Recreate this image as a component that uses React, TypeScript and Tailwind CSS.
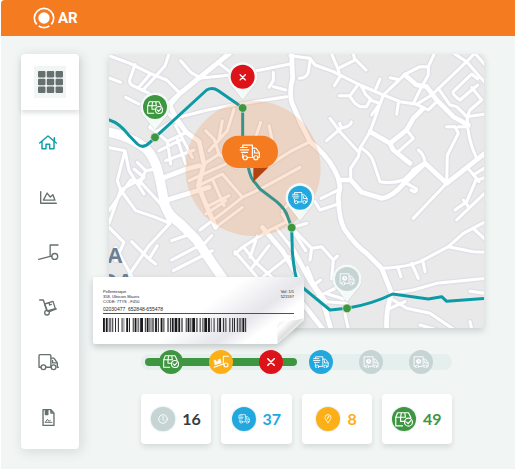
import { ReactNode } from 'react';
import clsx from 'clsx';

interface IconProps {
  className?: string;
  x?: number;
  y?: number;
  width?: number;
  height?: number;
}

const stroke = {
  fill: 'none',
  stroke: 'currentColor',
  strokeLinecap: 'round',
  strokeLinejoin: 'round',
} as const;

function FastTruckIcon(props: IconProps) {
  return (
    <svg viewBox="0 0 60 48" {...stroke} strokeWidth={3.4} {...props}>
      <path d="M9 8V3h28v36H23M9 29v10M37 12h10l10 13v14h-4" />
      <path d="M43 18v8h13M2 10h20M0 17h26M5 24h18" />
      <circle cx="16" cy="40" r="6" />
      <circle cx="47" cy="40" r="6" />
    </svg>
  );
}

function ClockTruckIcon(props: IconProps) {
  return (
    <svg viewBox="0 0 60 48" {...stroke} strokeWidth={3.4} {...props}>
      <path d="M10 39H4V3h34v36H22M38 12h9l10 14v13h-4M44 18v8h12" />
      <circle cx="21" cy="20" r="8" fill="currentColor" />
      <path d="M21 15v6h4" stroke="#c6d4d3" strokeWidth={2.5} />
      <circle cx="16" cy="40" r="6" />
      <circle cx="47" cy="40" r="6" />
    </svg>
  );
}

function BoxCheckIcon(props: IconProps) {
  return (
    <svg viewBox="0 0 48 40" {...stroke} strokeWidth={3.2} {...props}>
      <path d="M20 37H2V14L7 2h29l6 12v2M2 14h24M17 2l-2 12v11h12M26 2l2 12" />
      <circle cx="36" cy="27" r="10.5" />
      <path d="M31 27l4 4 7-8" />
    </svg>
  );
}

function LoaderIcon(props: IconProps) {
  return (
    <svg viewBox="0 0 48 40" {...stroke} strokeWidth={3.2} {...props}>
      <path d="M46 4H31v23L3 37M31 28l2 1" />
      <circle cx="39" cy="30" r="6" />
      <path d="M3 15l6 1 1 4 6-2-1-4 7-2 3 12-19 6z" fill="currentColor" strokeWidth={1} />
    </svg>
  );
}

function CrossIcon(props: IconProps) {
  return (
    <svg viewBox="0 0 20 20" {...stroke} strokeWidth={4} {...props}>
      <path d="M2 2l16 16M18 2L2 18" />
    </svg>
  );
}

function ClockIcon(props: IconProps) {
  return (
    <svg viewBox="0 0 28 28" {...stroke} strokeWidth={2.6} {...props}>
      <circle cx="14" cy="14" r="12" />
      <path d="M14 7v8l4 4" />
    </svg>
  );
}

function PlaceIcon(props: IconProps) {
  return (
    <svg viewBox="0 0 24 28" {...stroke} strokeWidth={2.4} {...props}>
      <path d="M12 26C8 20 3 16 3 10a9 8 0 0118 0c0 6-5 10-9 16z" />
      <path d="M9 16l6-9M15 9l-4 1" />
    </svg>
  );
}

const menu: { label: string; icon: ReactNode }[] = [
  {
    label: 'Home',
    icon: (
      <svg viewBox="0 0 54 44" {...stroke} strokeWidth={4.4} className="w-[18px] text-[#0f9fa8]">
        <path d="M2 24L27 3l25 21M9 19v22h12V28h11v13h13V19M46 17V8" />
      </svg>
    ),
  },
  {
    label: 'Statistics',
    icon: (
      <svg viewBox="0 0 50 38" {...stroke} strokeWidth={4} className="w-[17px]">
        <path d="M2 2v34h46M10 27h34L38 11l-8 7-9-12z" />
      </svg>
    ),
  },
  {
    label: 'Loading',
    icon: (
      <svg viewBox="0 0 64 50" {...stroke} strokeWidth={4} className="w-[21px]">
        <path d="M61 3H37v35L2 47M37 37l5 1" />
        <circle cx="51" cy="38" r="9" />
      </svg>
    ),
  },
  {
    label: 'Parcels',
    icon: (
      <svg viewBox="0 0 54 50" {...stroke} strokeWidth={4} className="w-[18px]">
        <path d="M2 3h11l10 31M31 38l21-8" />
        <path d="M17 15l25-8 7 22-24 7zM30 11l2 7 5-2" />
        <circle cx="24" cy="41" r="7" />
      </svg>
    ),
  },
  {
    label: 'Deliveries',
    icon: (
      <svg viewBox="0 0 62 48" {...stroke} strokeWidth={4} className="w-[21px]">
        <path d="M8 39H3V5q0-3 3-3h29q3 0 3 3v34H24M38 12h9l10 14v13h3M46 26h11M38 39h1M43 19v7h10" />
        <circle cx="16" cy="39" r="7" />
        <circle cx="46" cy="39" r="7" />
      </svg>
    ),
  },
  {
    label: 'Reports',
    icon: (
      <svg viewBox="0 0 38 50" {...stroke} strokeWidth={4} className="w-[13px]">
        <path d="M3 2h23l9 10v36H3zM26 2v10h9M10 3v13h7V3M13 4v11" />
        <path d="M9 39h20M11 37l5-7 4 6 4-2" strokeWidth={2.8} />
      </svg>
    ),
  },
];

const mainRoads = [
  'M-5 234C40 240 85 262 112 285C145 320 152 370 162 425C168 475 190 490 213 508L263 558L303 618L360 700L450 822',
];

const wideRoads = [
  'M365 -5L213 118L125 220',
  'M213 118L180 150L200 190L232 235L270 262L285 330L268 395L290 450L320 520',
  'M548 0L551 73Q540 110 548 145L573 203L603 263Q650 300 675 345L688 373L693 400L688 428Q690 500 708 528Q740 575 773 598L818 643L848 718Q830 770 833 825',
  'M888 63L923 93L953 98L983 138L1033 188L1078 213',
  'M943 163L913 193L893 228L843 268L853 288L903 328',
  'M783 233L843 268',
  'M913 350L948 328L1013 388L1130 296',
  'M688 378H725L758 415L818 433Q850 430 888 385L948 328',
  'M162 372L232 345L270 335M168 440L250 415L300 400',
  'M460 520L520 590L575 680M543 700L640 823',
  'M543 570L603 680L640 735L665 823',
];

const roads = [
  'M-5 3L63 28L123 58L173 78L213 118',
  'M78 32L62 78Q60 92 78 98L120 118L170 170L232 235',
  'M180 0L168 35L130 78M122 62L88 102M100 110L130 78',
  'M215 20L245 55L275 72M330 28L365 55',
  'M275 72L345 65L420 55L543 30',
  'M218 188L295 168L373 153L533 128',
  'M493 55V80L480 100M493 98L530 108',
  'M543 5L603 13L618 33L673 53L753 93L823 123L873 143L923 151L968 123L1073 23L1100 -5',
  'M603 18L598 55Q592 73 571 73',
  'M668 0L688 48L693 68L676 95M688 43L738 18L733 0M738 15L771 48',
  'M813 75L801 103M863 181L868 148',
  'M823 123L888 61L933 38H958L978 -5M958 38V63L938 98L913 148M843 71L865 76',
  'M988 103L1023 153L1043 158L1073 188L1130 180',
  'M983 143L958 168L923 151M893 228L913 253L868 293',
  'M823 123L783 233L753 283L748 308L725 343V378',
  'M663 193L693 233L748 293M653 260L697 222Q724 218 727 204M697 222L692 208',
  'M758 283Q785 300 793 323L813 383Q850 390 883 378L913 350M928 288Q945 300 948 325',
  'M1013 388L1015 303L1048 238L1038 218H1013M1048 218H1078',
  'M1075 188Q1073 250 1103 313M1073 23L1130 88M1030 -5L1073 23M1095 -5L1130 35',
  'M1106 75L1088 60L1033 113Q1028 120 1053 138L1106 93M1088 100L1118 138L1083 168L1075 188',
  'M691 125H723L743 98M723 128L738 148L753 158H773L783 138L813 148L788 183M758 98L770 122L790 140',
  'M888 385L923 405Q922 420 906 408',
  'M1073 338L1110 383M1093 363L1130 340M1100 380L1130 370',
  'M913 493L1013 388M1103 373L1073 443L1038 468M1043 498L1130 415M1063 438L1080 460',
  'M818 643Q900 640 943 618L1018 578L1063 538L1130 503M1018 578L1093 593L1130 595M1093 523L1130 558',
  'M866 638L876 668M908 628L928 673M941 618L948 653',
  'M848 718L913 708L983 688L1130 673M853 738L893 763L963 778L1033 825M888 743L843 763',
  'M933 813L985 828M1083 803L1088 825M1083 712L1130 718',
  'M636 433L688 408M618 443L633 468L693 448',
  'M548 521L593 508M548 521L608 583L603 618M608 583L638 578L673 618L668 675M673 618L685 606',
  'M595 640L615 690L653 743L713 748L708 780L718 825M618 733L678 703M618 690L635 678M655 720L705 735',
  'M-5 70L35 85M50 130L90 150',
  'M125 220L175 262L232 235M140 235L210 188M175 262L185 330M150 290L215 258M200 215L250 310M170 320L255 288M205 255L230 330',
  'M-5 280L48 290L25 380L35 408L0 508M48 290L60 350L105 420',
  'M35 408L105 370L75 345M85 325L110 350L140 345M110 350L95 385',
  'M65 378L100 390L155 450L183 508L120 575L55 670M35 408L80 470L140 490L183 508M65 378L0 470',
  'M68 563L120 615L140 630M120 615L145 575M0 520L45 565L20 620M20 580L70 670',
  'M188 560L245 540M188 618L290 565M193 650L310 590M275 580L308 545',
  'M285 330L330 300L380 340M268 395L340 360L400 430M240 380L350 330M300 455L360 425M330 300L315 255L290 230M310 375L345 455',
  'M273 528L358 463L400 430L463 400L573 340M290 480L350 440M320 520L400 460',
  'M340 200L330 255M375 165L355 230L300 290M430 370L470 340L543 293L603 263M455 205L440 250M480 215L490 260',
  'M378 593L443 668M403 578L473 533L540 500M403 578L440 625L500 680M378 600L400 580M445 545L423 610M463 668L540 608M480 575L430 640',
  'M500 520L555 590M520 480L590 590M585 400L520 470',
];

const route =
  'M-5 196Q30 205 58 242L85 270Q103 286 123 265L138 250L293 108Q310 98 328 110L368 138L401 161V245Q402 290 418 340Q425 375 440 388L453 405L503 443Q528 465 535 485L548 521L550 590Q555 660 568 690L663 768L714 763Q790 750 851 720L958 735L998 728L1013 742L1130 733';

interface PinProps {
  x: number;
  y: number;
  fill: string;
  children: ReactNode;
}

function Pin({ x, y, fill, children }: PinProps) {
  return (
    <g transform={`translate(${x} ${y})`}>
      <path
        d="M0 70L-28 34A44 44 0 1128 34z"
        className="fill-[#f4faf8] drop-shadow-[0_1px_2px_rgba(80,100,100,0.3)]"
        strokeLinejoin="round"
      />
      <circle r="36" fill={fill} />
      {children}
    </g>
  );
}

function DeliveryMap() {
  return (
    <svg
      viewBox="0 0 1125 822"
      role="img"
      aria-label="Delivery route map"
      className="block w-full rounded bg-[#e9e9ea] text-white shadow-[0_3px_6px_rgba(90,110,110,0.25)]"
    >
      <g fill="none" strokeLinecap="round" strokeLinejoin="round">
        <g stroke="#dfdfe6">
          <path d={roads.join('')} strokeWidth={17} />
          <path d={wideRoads.join('')} strokeWidth={22} />
          <path d={mainRoads.join('')} strokeWidth={36} />
        </g>
        <g stroke="#fff">
          <path d={roads.join('')} strokeWidth={9} />
          <path d={wideRoads.join('')} strokeWidth={14} />
          <path d={mainRoads.join('')} strokeWidth={28} />
        </g>
        <path d={route} stroke="#0c9ba5" strokeWidth={9} />
      </g>

      <g className="fill-[#6c7f90] font-['Liberation_Sans',sans-serif] text-[66px] font-bold">
        <text x="-6" y="628">A</text>
        <text x="-26" y="706">OA</text>
      </g>

      <circle cx="432" cy="343" r="203" fill="#f47b20" opacity="0.19" />

      <path d="M433 340h45l-45 44z" fill="#b1430f" />
      <rect x="339" y="245" width="168" height="97" rx="48" fill="#f47b20" />
      <FastTruckIcon x={392} y={270} width={62} height={50} />

      <g fill="#3f9641" stroke="#e6f2ea" strokeWidth={2}>
        <circle cx="138" cy="250" r="13" />
        <circle cx="401" cy="162" r="13" />
        <circle cx="548" cy="521" r="13" />
        <circle cx="714" cy="763" r="13" />
      </g>

      <Pin x={138} y={159} fill="#3f9641">
        <BoxCheckIcon x={-24} y={-18} width={48} height={40} />
      </Pin>
      <Pin x={401} y={68} fill="#dc1419">
        <CrossIcon x={-10} y={-8} width={20} height={20} />
      </Pin>
      <Pin x={573} y={431} fill="#22a8df">
        <FastTruckIcon x={-24} y={-18} width={48} height={38} />
      </Pin>
      <Pin x={714} y={675} fill="#c6d4d3">
        <ClockTruckIcon x={-24} y={-18} width={48} height={38} />
      </Pin>
    </svg>
  );
}

const bars = '2121311212131112211311212132112111312112211321112131212311211131221211312112131122112312111211312112';

function Barcode() {
  let x = 0;
  const rects = bars.split('').map((n, i) => {
    const width = Number(n) * 2.8;
    const start = x;
    x += width;
    if (i % 2) return null;
    const shade = i % 10 === 4 ? '#77777b' : '#19191c';
    return <rect key={i} x={start} width={width} height={42} fill={shade} />;
  });
  return (
    <svg
      viewBox={`0 0 ${x} 42`}
      preserveAspectRatio="none"
      role="img"
      aria-label="Barcode"
      className="mt-1 block h-3.5 w-[145px]"
    >
      {rects}
    </svg>
  );
}

function ShippingLabel() {
  return (
    <div className="absolute top-[223px] -left-4 isolate h-[67px] w-[211px] px-2.5 pt-3 font-['Liberation_Sans',sans-serif] text-[4px]/[5px] text-[#252529]">
      <svg
        viewBox="0 0 211 67"
        className="absolute inset-0 -z-10 drop-shadow-[0_3px_3px_rgba(80,95,95,0.3)]"
      >
        <defs>
          <linearGradient id="paper" x1="0.2" y1="0" x2="1" y2="0.35">
            <stop offset="0.55" stopColor="#fff" />
            <stop offset="0.85" stopColor="#e6e6eb" />
            <stop offset="1" stopColor="#fff" />
          </linearGradient>
          <linearGradient id="curl" x1="0" y1="0" x2="1" y2="1">
            <stop offset="0" stopColor="#e2e2e6" />
            <stop offset="0.25" stopColor="#fff" />
            <stop offset="0.45" stopColor="#dededf" />
            <stop offset="0.65" stopColor="#fff" />
          </linearGradient>
        </defs>
        <path d="M2 0h207q2 0 2 2v41l-27 24H2q-2 0-2-2V2q0-2 2-2z" fill="url(#paper)" />
        <path d="M184 67c2-7-2-15 1-20s16-2 26-6c-1 5-20 20-27 26z" fill="url(#curl)" />
      </svg>
      <div className="flex justify-between">
        <p>
          Pellentesque
          <br />
          358, Ultricies Mauris
          <br />
          CODE: 7TYS - F450
        </p>
        <p className="text-right">
          Vol: 1/1
          <br />
          521597
        </p>
      </div>
      <p className="mt-0.5 border-b border-[#505054] pb-px text-[5px]/[6px] whitespace-pre">
        {'02030477  652848-655478'}
      </p>
      <Barcode />
    </div>
  );
}

const steps = [
  { name: 'Packed', color: 'bg-[#3f9641]', icon: <BoxCheckIcon className="w-4" /> },
  { name: 'Loaded', color: 'bg-[#fdaf17]', icon: <LoaderIcon className="w-4" /> },
  { name: 'Failed', color: 'bg-[#dc1419]', icon: <CrossIcon className="w-2" /> },
  { name: 'On the way', color: 'bg-[#22a8df]', icon: <FastTruckIcon className="w-4" /> },
  { name: 'Waiting', color: 'bg-[#c6d4d3]', icon: <ClockTruckIcon className="w-4" /> },
  { name: 'Scheduled', color: 'bg-[#c6d4d3]', icon: <ClockTruckIcon className="w-4" /> },
];

function Progress() {
  return (
    <ol className="relative mt-[26px] flex h-4 items-center justify-between rounded-full bg-[#e5efed] pr-[19px] pl-[18px]">
      <li aria-hidden="true" className="absolute left-1 h-2 w-[49%] rounded-full bg-[#3f9641]" />
      {steps.map((step) => (
        <li
          key={step.name}
          aria-label={step.name}
          className={clsx('relative flex size-6 items-center justify-center rounded-full text-white', step.color)}
        >
          {step.icon}
        </li>
      ))}
    </ol>
  );
}

const stats = [
  { value: 16, badge: 'bg-[#c6d4d3]', text: 'text-[#383b3d]', icon: <ClockIcon className="w-2.5" /> },
  { value: 37, badge: 'bg-[#22a8df]', text: 'text-[#22a8df]', icon: <FastTruckIcon className="w-3" /> },
  { value: 8, badge: 'bg-[#fdaf17]', text: 'text-[#fdaf17]', icon: <PlaceIcon className="w-2" /> },
  { value: 49, badge: 'bg-[#3f9641]', text: 'text-[#3f9641]', icon: <BoxCheckIcon className="w-[18px]" /> },
];

function Stats() {
  return (
    <div className="mt-6 grid grid-cols-4 gap-2.5">
      {stats.map((stat) => (
        <div
          key={stat.value}
          className="flex h-[50px] items-center justify-center gap-[7px] rounded bg-white shadow-[0_3px_5px_rgba(90,110,110,0.18)]"
        >
          <span
            className={clsx(
              'flex size-6 items-center justify-center rounded-full text-white shadow-[0_0_2px_rgba(150,190,190,0.7)]',
              stat.badge
            )}
          >
            {stat.icon}
          </span>
          <span className={clsx('text-base/6 font-bold', stat.text)}>{stat.value}</span>
        </div>
      ))}
    </div>
  );
}

function Sidebar() {
  return (
    <aside className="w-[58px] shrink-0 self-start rounded bg-white text-[#66706f] shadow-[2px_2px_12px_rgba(90,110,110,0.2)]">
      <div className="flex h-14 items-center justify-center rounded-t shadow-[0_3px_4px_rgba(90,100,110,0.2)]">
        <button aria-label="Apps" className="flex size-8 items-center justify-center bg-[#f1f5f4]">
          <svg viewBox="0 0 74 66" fill="currentColor" className="w-[25px]">
            {[0, 23, 46].map((y) =>
              [0, 26, 52].map((x) => <rect key={`${x}-${y}`} x={x} y={y} width="22" height="19" rx="3" />)
            )}
          </svg>
        </button>
      </div>
      <nav className="flex flex-col pt-[5px] pb-1">
        {menu.map((item) => (
          <a key={item.label} href="#" aria-label={item.label} className="flex h-[55px] items-center justify-center pr-1">
            {item.icon}
          </a>
        ))}
      </nav>
    </aside>
  );
}

export default function App() {
  return (
    <div className="min-h-screen bg-white pl-px font-[Lato,sans-serif]">
      <div className="min-h-screen rounded-tl bg-[#f1f5f4]">
        <header className="flex h-9 items-center gap-[3px] rounded-tl bg-[#f47b20] pl-8 text-white">
          <svg viewBox="0 0 66 66" className="w-[22px]" fill="none" stroke="currentColor">
            <circle cx="33" cy="33" r="17" fill="currentColor" stroke="none" />
            <path d="M11 52A29 29 0 1155 52M17 57Q33 67 49 57" strokeWidth="5" />
          </svg>
          <span className="font-[Roboto,sans-serif] text-[15px]/5 font-bold">AR</span>
        </header>
        <div className="flex gap-[30px] pt-[18px] pr-[31px] pb-5 pl-5">
          <Sidebar />
          <main className="min-w-0 flex-1">
            <div className="relative isolate">
              <DeliveryMap />
              <ShippingLabel />
            </div>
            <div className="px-8">
              <Progress />
              <Stats />
            </div>
          </main>
        </div>
      </div>
    </div>
  );
}
